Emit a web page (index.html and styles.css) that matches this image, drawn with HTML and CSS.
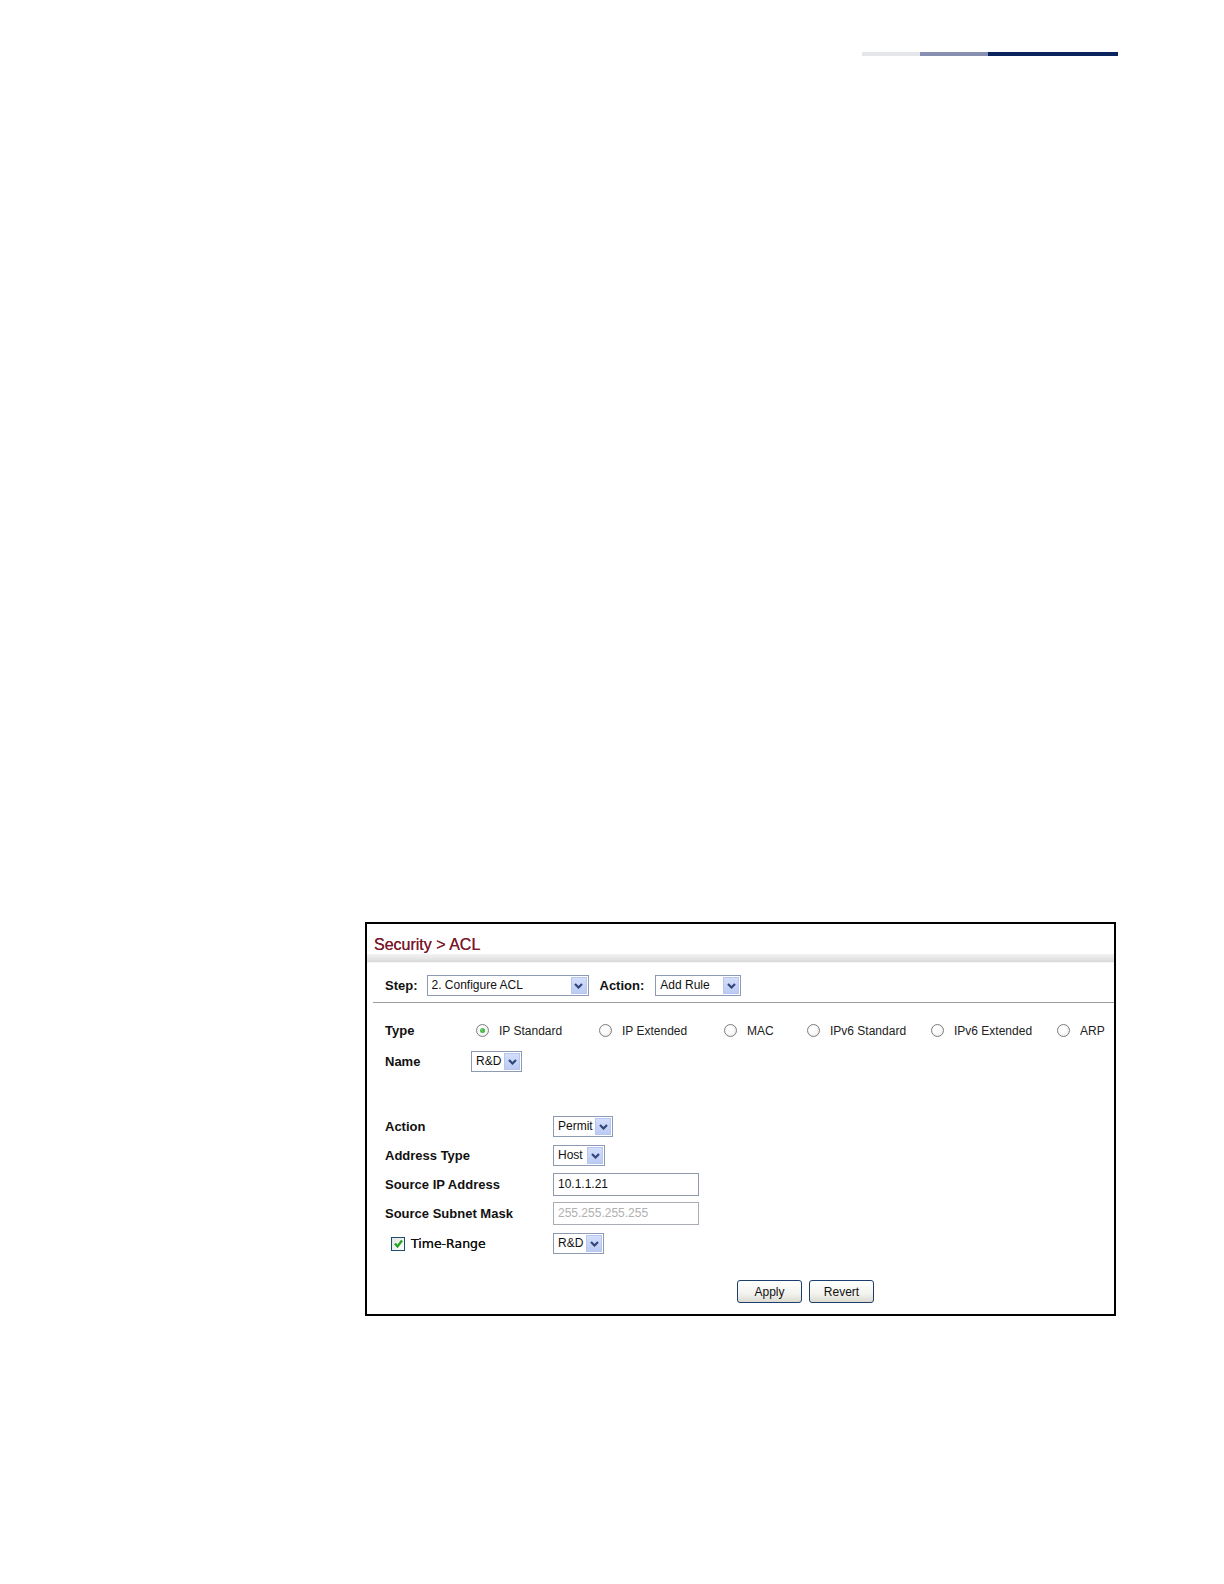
FILE: index.html
```html
<!DOCTYPE html>
<html lang="en">
<head>
<meta charset="utf-8">
<title>Security &gt; ACL</title>
<link rel="stylesheet" href="styles.css">
</head>
<body>
<div class="page">
  <div class="topbar">
    <span class="seg seg-light"></span>
    <span class="seg seg-mid"></span>
    <span class="seg seg-dark"></span>
  </div>

  <div class="panel">
    <div class="title">Security &gt; ACL</div>
    <div class="band"></div>

    <div class="step-row">
      <span class="blabel">Step:</span>
      <div class="sel sel-step"><span class="sel-text">2. Configure ACL</span><span class="sel-btn"><svg width="9" height="6" viewBox="0 0 9 6"><path d="M1 1 L4.5 4.5 L8 1" fill="none" stroke="#33467a" stroke-width="2.2"/></svg></span></div>
      <span class="blabel act-label">Action:</span>
      <div class="sel sel-action"><span class="sel-text">Add Rule</span><span class="sel-btn"><svg width="9" height="6" viewBox="0 0 9 6"><path d="M1 1 L4.5 4.5 L8 1" fill="none" stroke="#33467a" stroke-width="2.2"/></svg></span></div>
    </div>
    <div class="sep"></div>

    <div class="type-row">
      <span class="blabel type-label">Type</span>
      <div class="radios">
        <label class="radio-item"><span class="radio checked"></span><span class="rtext">IP Standard</span></label>
        <label class="radio-item"><span class="radio"></span><span class="rtext">IP Extended</span></label>
        <label class="radio-item"><span class="radio"></span><span class="rtext">MAC</span></label>
        <label class="radio-item"><span class="radio"></span><span class="rtext">IPv6 Standard</span></label>
        <label class="radio-item"><span class="radio"></span><span class="rtext">IPv6 Extended</span></label>
        <label class="radio-item"><span class="radio"></span><span class="rtext">ARP</span></label>
      </div>
    </div>
    <div class="name-row">
      <span class="blabel type-label">Name</span>
      <div class="sel sel-name"><span class="sel-text">R&amp;D</span><span class="sel-btn"><svg width="9" height="6" viewBox="0 0 9 6"><path d="M1 1 L4.5 4.5 L8 1" fill="none" stroke="#33467a" stroke-width="2.2"/></svg></span></div>
    </div>

    <div class="form">
      <div class="frow">
        <span class="blabel flabel">Action</span>
        <div class="sel sel-permit"><span class="sel-text">Permit</span><span class="sel-btn"><svg width="9" height="6" viewBox="0 0 9 6"><path d="M1 1 L4.5 4.5 L8 1" fill="none" stroke="#33467a" stroke-width="2.2"/></svg></span></div>
      </div>
      <div class="frow">
        <span class="blabel flabel">Address Type</span>
        <div class="sel sel-host"><span class="sel-text">Host</span><span class="sel-btn"><svg width="9" height="6" viewBox="0 0 9 6"><path d="M1 1 L4.5 4.5 L8 1" fill="none" stroke="#33467a" stroke-width="2.2"/></svg></span></div>
      </div>
      <div class="frow">
        <span class="blabel flabel">Source IP Address</span>
        <div class="textbox">10.1.1.21</div>
      </div>
      <div class="frow">
        <span class="blabel flabel">Source Subnet Mask</span>
        <div class="textbox disabled">255.255.255.255</div>
      </div>
      <div class="frow frow-time">
        <span class="flabel check-label"><span class="checkbox"><svg width="11" height="11" viewBox="0 0 11 11"><path d="M2 5.5 L4.5 8.5 L9 2.5" fill="none" stroke="#21a321" stroke-width="2.2"/></svg></span><span class="ctext">Time-Range</span></span>
        <div class="sel sel-name"><span class="sel-text">R&amp;D</span><span class="sel-btn"><svg width="9" height="6" viewBox="0 0 9 6"><path d="M1 1 L4.5 4.5 L8 1" fill="none" stroke="#33467a" stroke-width="2.2"/></svg></span></div>
      </div>
    </div>

    <div class="buttons">
      <button class="btn" type="button">Apply</button>
      <button class="btn" type="button">Revert</button>
    </div>
  </div>
</div>
</body>
</html>
```

FILE: styles.css
```css
html, body {
  margin: 0;
  padding: 0;
  background: #ffffff;
}

.page {
  width: 1224px;
  min-height: 1584px;
  font-family: "Liberation Sans", Arial, sans-serif;
  font-size: 12px;
  color: #111;
}

.topbar {
  display: flex;
  margin: 52px 0 0 862px;
  width: 256px;
  height: 4px;
}

.seg { display: block; height: 100%; }
.seg-light { width: 58px; background: #e5e6e9; }
.seg-mid { width: 68px; background: #8790b0; }
.seg-dark { width: 130px; background: #0a245f; }

.panel {
  margin: 866px 0 0 365px;
  width: 747px;
  border: 2px solid #000;
  background: #fff;
  padding-bottom: 11px;
}

.title {
  padding: 10px 0 0 7px;
  height: 20px;
  line-height: 22px;
  font-family: "Liberation Sans", Arial, sans-serif;
  font-size: 16px;
  color: #7a1a2c;
  text-shadow: 0 0 0.3px #7a1a2c;
}

.band {
  height: 8px;
  background: linear-gradient(to bottom, #f3f3f3 0%, #e2e2e2 70%, #d6d6d6 100%);
  border-bottom: 1px solid #f6f6f6;
}

.blabel {
  font-family: "Liberation Sans", Arial, sans-serif;
  font-weight: bold;
  font-size: 13px;
  color: #111;
  white-space: nowrap;
}

.step-row {
  display: flex;
  align-items: center;
  height: 21px;
  padding: 12px 0 1px 18px;
}

.step-row .sel-step { margin-left: 9px; }
.act-label { margin-left: 11px; }
.step-row .sel-action { margin-left: 11px; }

.sep {
  margin: 5px 0 0 6px;
  height: 1px;
  background: #9c9c9c;
}

/* select look-alike */
.sel {
  display: flex;
  align-items: stretch;
  height: 21px;
  box-sizing: border-box;
  border: 1px solid #8c9bb3;
  background: #fff;
}
.sel-text {
  flex: 1;
  padding-left: 4px;
  line-height: 19px;
  font-size: 12px;
  color: #111;
  white-space: nowrap;
  overflow: hidden;
}
.sel-btn {
  width: 16px;
  margin: 1px;
  box-sizing: border-box;
  border: 1px solid #b7c6ef;
  background: linear-gradient(to bottom, #d3defa, #bccbf4);
  display: flex;
  align-items: center;
  justify-content: center;
}

.sel-step { width: 162px; }
.sel-action { width: 86px; }
.sel-name { width: 51px; }
.sel-permit { width: 60px; }
.sel-host { width: 52px; }

.type-row {
  display: flex;
  align-items: center;
  height: 21px;
  margin-top: 17px;
  padding-left: 18px;
}
.type-label { width: 86px; flex: none; }

.radios {
  display: grid;
  grid-template-columns: 123px 125px 83px 124px 126px auto;
  margin-left: 5px;
}
.radio-item {
  display: flex;
  align-items: center;
}
.radio {
  width: 13px;
  height: 13px;
  box-sizing: border-box;
  border-radius: 50%;
  border: 1px solid #7d7d7d;
  background: radial-gradient(circle at 40% 40%, #ffffff 30%, #e3e3e3 100%);
  display: flex;
  align-items: center;
  justify-content: center;
  flex: none;
}
.radio.checked::after {
  content: "";
  width: 5px;
  height: 5px;
  border-radius: 50%;
  background: radial-gradient(circle at 40% 40%, #6fd36f, #1f9a1f);
}
.rtext {
  margin-left: 10px;
  font-size: 12px;
  color: #222;
  white-space: nowrap;
}

.name-row {
  display: flex;
  align-items: center;
  height: 21px;
  margin-top: 10px;
  padding-left: 18px;
}

.form {
  margin-top: 43px;
  padding-left: 18px;
  display: flex;
  flex-direction: column;
  gap: 6px;
}
.frow {
  display: flex;
  align-items: center;
  height: 23px;
}
.frow-time { margin-top: 1px; }
.flabel { width: 168px; flex: none; }

.textbox {
  width: 146px;
  height: 23px;
  box-sizing: border-box;
  border: 1px solid #8e9aab;
  padding-left: 4px;
  line-height: 21px;
  font-size: 12px;
  color: #111;
  background: #fff;
}
.textbox.disabled {
  color: #b0b0b0;
  border-color: #a9aeb6;
}

.check-label {
  display: flex;
  align-items: center;
  padding-left: 6px;
  box-sizing: border-box;
}
.checkbox {
  width: 14px;
  height: 14px;
  box-sizing: border-box;
  border: 1px solid #1f4d6f;
  background: linear-gradient(135deg, #e4e4e0, #ffffff);
  display: flex;
  align-items: center;
  justify-content: center;
}
.ctext {
  margin-left: 6px;
  font-family: "DejaVu Sans", Verdana, sans-serif;
  font-size: 12.5px;
  color: #111;
  text-shadow: 0 0 0.4px #111;
}

.buttons {
  display: flex;
  gap: 7px;
  margin-top: 25px;
  padding-left: 370px;
}
.btn {
  width: 65px;
  height: 23px;
  box-sizing: border-box;
  border: 1px solid #1c3f6e;
  border-radius: 3px;
  background: linear-gradient(to bottom, #ffffff 0%, #f3f3ee 60%, #dcdad0 100%);
  font-family: "Liberation Sans", Arial, sans-serif;
  font-size: 12px;
  color: #111;
  padding: 0;
  margin: 0;
  cursor: default;
}
```
